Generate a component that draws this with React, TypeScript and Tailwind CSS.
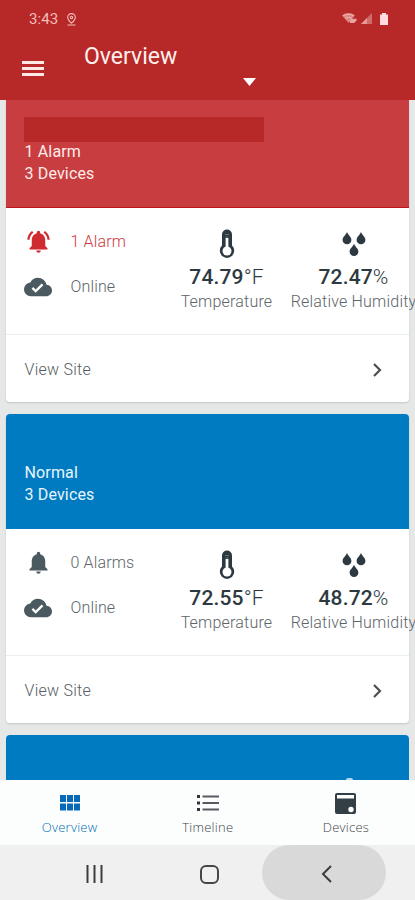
import React from "react";
import { MdNotifications, MdNotificationsActive, MdCloudDone } from "react-icons/md";

function StatusBar() {
  return (
    <div className="flex h-9 items-center justify-between pl-[29px] pr-[25px] text-[#f3bdb9]">
      <div className="flex items-center gap-[8px] pt-[2px]">
        <span className="text-[15px] leading-5 tracking-[0.1px]">3:43</span>
        <svg width="11" height="13" viewBox="0 0 11 13" fill="none" stroke="currentColor" strokeWidth="1.1">
          <path d="M5.5 10.2C3 7.8 1.7 6.2 1.7 4.4a3.8 3.8 0 0 1 7.600 0C9.300 6.200 8 7.800 5.500 10.200ZM1.500 12h8" />
          <circle cx="5.5" cy="4.4" r="1.2" />
        </svg>
      </div>
      <svg className="mt-[2px]" width="49" height="14" viewBox="0 0 49 14">
        <path d="M1 3.3Q7.5-1.5 14 3.3L7.5 11Z" fill="#dc8784" />
        <path d="M2 4Q7.5.5 13 4M4 6.400q3.500-2.200 7 0" stroke="#f0b3af" fill="none" />
        <path d="M9 10.5V8.300l1.500-1.500h5v2L13 11H9Z" fill="#e8a39f" />
        <path d="M20 12 31 1v11Z" fill="#cf6c6a" />
        <path d="M20 12l6-6v6Z" fill="#e69a97" />
        <path d="M41 1h4v1.500h2V13h-8V2.500h2Z" fill="#ffdcdd" />
      </svg>
    </div>
  );
}

function Header() {
  return (
    <header className="h-[100px] shrink-0 bg-[#b72828]">
      <StatusBar />
      <div className="flex h-16 pl-[22px]">
        <div className="flex w-[62px] flex-col gap-[3px] pt-[25px]">
          <i className="h-[3px] w-[22px] bg-[#ffe9e7]" />
          <i className="h-[3px] w-[22px] bg-[#ffe9e7]" />
          <i className="h-[3px] w-[22px] bg-[#ffe9e7]" />
        </div>
        <h1 className="w-[159px] pt-[7px] text-[23px] font-normal leading-7 text-[#fff0ee]">Overview</h1>
        <svg className="mt-[42px]" width="13" height="9" viewBox="0 0 13 9">
          <path d="M0 0h13L6.500 8Z" fill="#fff" />
        </svg>
      </div>
    </header>
  );
}

function Thermometer() {
  return (
    <svg width="16" height="30" viewBox="0 0 16 30">
      <path d="M3 5.500a5 5 0 0 1 10 0V16.500a7.200 7.200 0 1 1-10 0Z" fill="#2d3940" />
      <circle cx="8" cy="22" r="4.500" fill="#fff" />
      <path d="M6.600 9h2.800v10H6.600Z" fill="#fff" />
      <path d="M6 5.500h4M6.500 8h3" stroke="#75808a" strokeWidth="0.800" />
    </svg>
  );
}

function Drops() {
  return (
    <svg width="24" height="24" viewBox="0 0 24 24" fill="#2d3940">
      <path d="M5 0C6 2.800 9.400 5 9.400 7.900a4.400 4.400 0 0 1-8.800 0C.6 5 4 2.800 5 0Z" />
      <path d="M19 0c1 2.800 4.400 5 4.400 7.900a4.400 4.400 0 0 1-8.800 0C14.600 5 18 2.800 19 0Z" />
      <path d="M12 11.700c1 2.800 4.400 5 4.400 7.900a4.400 4.400 0 0 1-8.800 0C7.600 16.700 11 14.500 12 11.700Z" />
    </svg>
  );
}

function Reading({ icon, value, unit, label, className }: { icon: React.ReactNode; value: string; unit: string; label: string; className: string }) {
  return (
    <div className={`flex shrink-0 flex-col items-center whitespace-nowrap ${className}`}>
      <div className="flex h-[35px] items-center">{icon}</div>
      <div className="mt-[3px] text-[21px] leading-[27px] tracking-[0.15px] text-[#2d3940]">
        <span className="font-medium">{value}</span>
        <span className="font-light">{unit}</span>
      </div>
      <div className="text-[16px] font-light leading-[22px] tracking-[0.2px] text-[#5d6468]">{label}</div>
    </div>
  );
}

type Site = { alarm: boolean; status: string; alarms: string; temperature: string; humidity: string };

function SiteCard({ site }: { site: Site }) {
  return (
    <section className="shrink-0 rounded bg-white shadow-[0_1px_2px_rgba(0,0,0,0.15)]">
      <div
        className={
          site.alarm
            ? "h-[108px] border-b border-[#bd1519] bg-[#c83d3f] pl-[18.5px] pt-[17px] text-[#ffeceb]"
            : "h-[115px] rounded-t bg-[#007ac1] pl-[18.5px] pt-[23px] text-[#e8f5fc]"
        }
      >
        <div className={site.alarm ? "-ml-px h-[25px] w-[240px] bg-[#b72828]" : "h-[25px]"} />
        <div className={site.alarm ? "-mt-px text-[16px] leading-[22px] tracking-[0.15px]" : "text-[16px] leading-[22px] tracking-[0.15px]"}>
          <p>{site.status}</p>
          <p>3 Devices</p>
        </div>
      </div>
      <div className="flex h-[127px] border-b border-[#ebeeee] pl-[17.5px] pt-[18px]">
        <div className="flex w-[130.5px] shrink-0 flex-col text-[16px] font-light tracking-[0.15px] text-[#5b6468]">
          <div className={site.alarm ? "flex h-[31px] items-center text-[#d03a40]" : "flex h-[31px] items-center"}>
            <span className="flex w-[47px] pl-px">
              {site.alarm ? <MdNotificationsActive size={27} color="#d02b30" /> : <MdNotifications size={27} color="#4b5960" />}
            </span>
            {site.alarms}
          </div>
          <div className="mt-[14px] flex h-[31px] items-center">
            <span className="w-[47px]">
              <MdCloudDone size={28} color="#4b5960" />
            </span>
            Online
          </div>
        </div>
        <Reading className="w-[145px]" icon={<Thermometer />} value={site.temperature} unit="°F" label="Temperature" />
        <Reading className="w-[109px]" icon={<Drops />} value={site.humidity} unit="%" label="Relative Humidity" />
      </div>
      <div className="flex h-[67px] items-center justify-between pl-[18.5px] pr-[27px] pt-[2px] text-[16px] font-light text-[#555d62]">
        <span className="tracking-[0.25px]">View Site</span>
        <svg width="10" height="14" viewBox="0 0 10 14" fill="none" stroke="#4b5054" strokeWidth="2.2">
          <path d="M2 1l6 6-6 6" />
        </svg>
      </div>
    </section>
  );
}

const sites: Site[] = [
  { alarm: true, status: "1 Alarm", alarms: "1 Alarm", temperature: "74.79", humidity: "72.47" },
  { alarm: false, status: "Normal", alarms: "0 Alarms", temperature: "72.55", humidity: "48.72" },
];

function Tab({ label, active, children }: { label: string; active?: boolean; children: React.ReactNode }) {
  return (
    <div className="flex w-[138.5px] flex-col items-center pt-[11px]">
      <div className="flex h-6 items-center">{children}</div>
      <span className={`font-['Open_Sans','Noto_Sans',sans-serif] text-[13px] font-light leading-6 tracking-[0.25px] ${active ? "text-[#006eb5]" : "text-[#404548]"}`}>{label}</span>
    </div>
  );
}

export default function App() {
  return (
    <div className="flex h-[900px] w-[415px] flex-col overflow-hidden bg-[#e6e8e8] font-[Roboto,sans-serif]">
      <Header />
      <main className="flex h-[680px] shrink-0 flex-col gap-3 overflow-hidden pl-[6px] pr-[6px]">
        {sites.map((site) => (
          <SiteCard key={site.status} site={site} />
        ))}
        <div className="flex h-[45px] shrink-0 items-end justify-end rounded-t bg-[#007ac1] pr-[56px]">
          <i className="h-[2px] w-[7px] rounded-t bg-[#b4d9ec]" />
        </div>
      </main>
      <nav className="flex h-[65px] shrink-0 bg-[#fcfefe] pl-[0.5px]">
        <Tab label="Overview" active>
          <svg width="20" height="16" viewBox="0 0 20 16" fill="#0869b8">
            <path d="M0 0h6v7H0ZM7 0h6v7H7ZM14 0h6v7h-6ZM0 8.500h6v7H0ZM7 8.500h6v7H7ZM14 8.500h6v7h-6Z" />
          </svg>
        </Tab>
        <Tab label="Timeline">
          <svg width="22" height="18" viewBox="0 0 22 18">
            <path d="M0 1h3v3H0ZM0 7.500h3v3H0ZM0 14h3v3H0Z" fill="#30363a" />
            <path d="M5.500 2.500H22M5.500 9H22M5.500 15.500H22" stroke="#555b60" strokeWidth="2" />
          </svg>
        </Tab>
        <Tab label="Devices">
          <svg width="21" height="21" viewBox="0 0 21 21">
            <rect width="21" height="21" rx="2" fill="#343f45" />
            <path d="M2 2h17v3.500H2Z" fill="#fff" />
            <circle cx="16" cy="16.500" r="2.700" fill="#fff" />
          </svg>
        </Tab>
      </nav>
      <footer className="flex h-[55px] shrink-0 items-center bg-[#f0f0f0] pl-[86px]">
        <svg className="mt-[3px]" width="17" height="18" viewBox="0 0 17 18" stroke="#3c3c3c" strokeWidth="2">
          <path d="M1.500 0v18M8.500 0v18M15.500 0v18" />
        </svg>
        <div className="ml-[97px] mt-[3px] h-[19px] w-[19px] rounded-[6px] border-2 border-[#464646]" />
        <div className="ml-[43px] flex h-[55px] w-[124px] items-center justify-center rounded-full bg-[#d9d9d9]">
          <svg className="mr-[-4px] mt-[3px]" width="11" height="18" viewBox="0 0 11 18" fill="none" stroke="#3d3d3d" strokeWidth="2">
            <path d="M10 1 2 9l8 8" />
          </svg>
        </div>
      </footer>
    </div>
  );
}
